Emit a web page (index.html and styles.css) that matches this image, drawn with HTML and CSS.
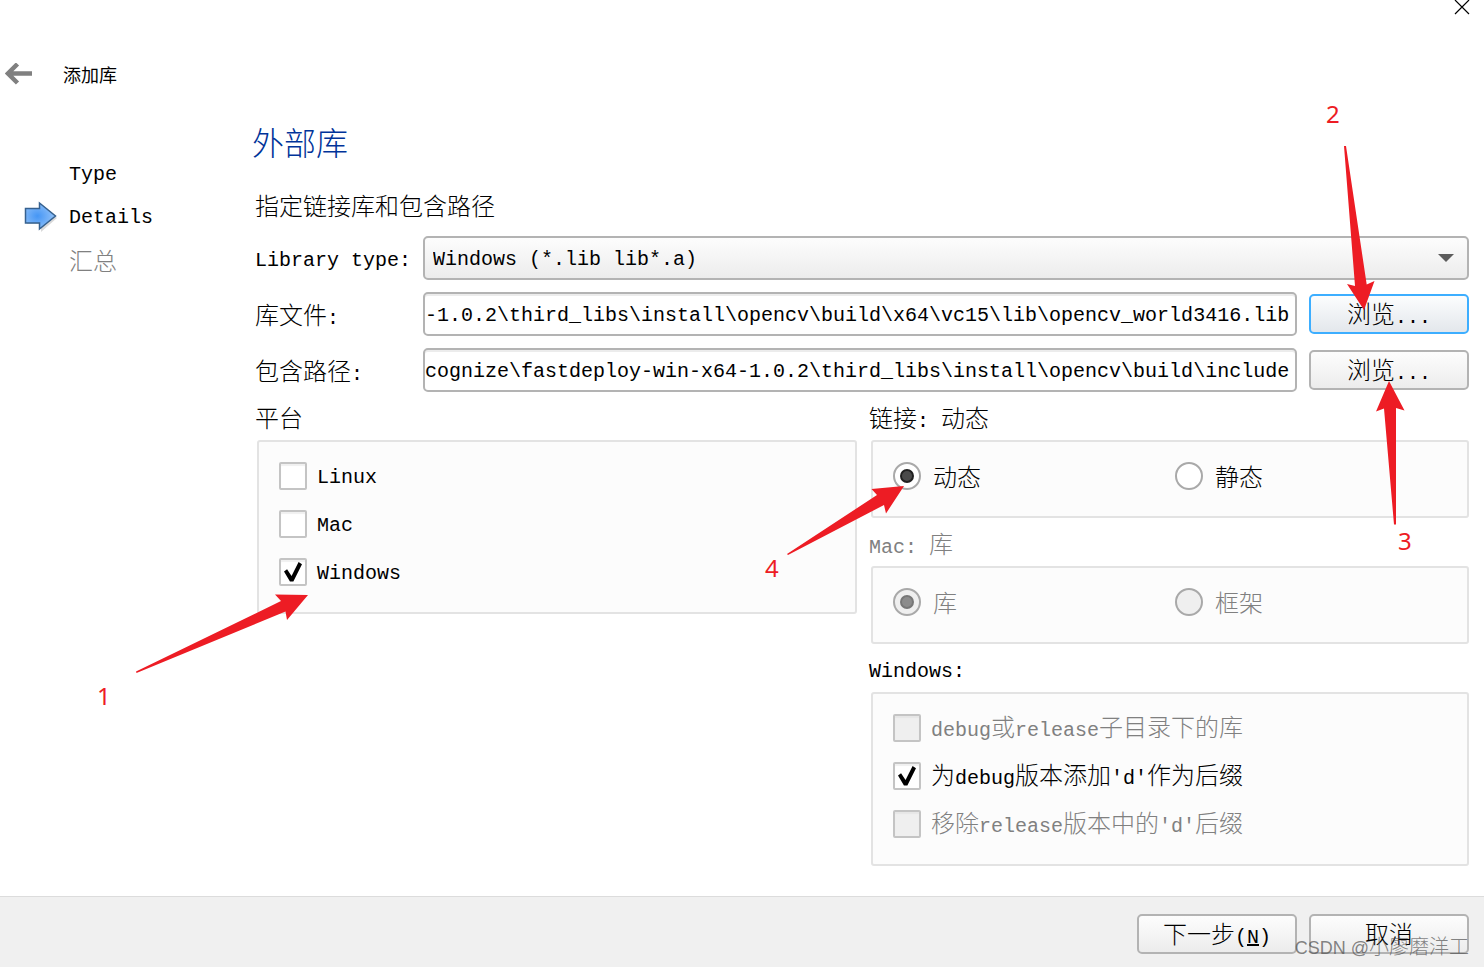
FILE: index.html
```html
<!DOCTYPE html>
<html lang="zh-CN">
<head>
<meta charset="utf-8">
<title>添加库</title>
<link rel="stylesheet" href="styles.css">
</head>
<body>
<div class="wizard">
  <header class="titlebar">
    <button class="close" type="button" aria-label="关闭">
      <svg width="16" height="15" viewBox="0 0 16 15"><path d="M1 0L15 14M15 0L1 14" stroke="#000" stroke-width="1.2" fill="none"/></svg>
    </button>
    <div class="title-row">
      <button class="back" type="button" aria-label="返回">
        <svg width="28" height="22" viewBox="0 0 28 22"><path d="M27 10.500H3M12.500 1L3 10.500L12.500 20" stroke="#808080" stroke-width="4.500" fill="none"/></svg>
      </button>
      <span class="title">添加库</span>
    </div>
  </header>

  <div class="body">
    <nav class="steps">
      <ol>
        <li><span class="en">Type</span></li>
        <li class="current">
          <svg class="step-arrow" width="34" height="31" viewBox="0 0 34 31">
            <defs>
              <radialGradient id="blue" cx="0.4" cy="0.5" r="0.6"><stop offset="0" stop-color="#4596f5"/><stop offset="1" stop-color="#93c2f8"/></radialGradient>
            </defs>
            <path d="M3 9H17V3L33 17L17 31V23H3Z" fill="#000" opacity="0.15"/>
            <path d="M1.500 7.500H15.500V2L31.500 15L15.500 28V22H1.500Z" fill="url(#blue)" stroke="#36618f" stroke-width="1.500"/>
          </svg>
          <span class="en">Details</span>
        </li>
        <li class="muted"><span class="zh">汇总</span></li>
      </ol>
    </nav>

    <main class="page">
      <h1>外部库</h1>
      <p class="intro zh">指定链接库和包含路径</p>

      <div class="form">
        <label class="en" for="type">Library type:</label>
        <div class="select-wrap">
          <select id="type"><option>Windows (*.lib lib*.a)</option></select>
          <svg class="caret" width="16" height="8" viewBox="0 0 16 8"><path d="M0 0H16L8 8Z" fill="#5c5c5c"/></svg>
        </div>
        <label for="lib"><span class="zh">库文件</span>:</label>
        <input class="field" id="lib" type="text" value="-1.0.2\third_libs\install\opencv\build\x64\vc15\lib\opencv_world3416.lib">
        <button class="btn focused" type="button"><span class="zh">浏览</span>...</button>
        <label for="inc"><span class="zh">包含路径</span>:</label>
        <input class="field" id="inc" type="text" value="cognize\fastdeploy-win-x64-1.0.2\third_libs\install\opencv\build\include">
        <button class="btn" type="button"><span class="zh">浏览</span>...</button>
      </div>

      <div class="groups">
        <section class="column">
          <h2 class="zh">平台</h2>
          <div class="box">
            <label class="option"><input type="checkbox"><span class="en">Linux</span></label>
            <label class="option"><input type="checkbox"><span class="en">Mac</span></label>
            <label class="option"><input type="checkbox" checked><span class="en">Windows</span></label>
          </div>
        </section>
        <section class="column">
          <h2><span class="zh">链接</span>: <span class="zh">动态</span></h2>
          <div class="box pair">
            <label class="option"><input type="radio" name="link" checked><span class="zh">动态</span></label>
            <label class="option"><input type="radio" name="link"><span class="zh">静态</span></label>
          </div>
          <h2 class="muted">Mac: <span class="zh">库</span></h2>
          <div class="box pair">
            <label class="option muted"><input type="radio" name="mac" checked disabled><span class="zh">库</span></label>
            <label class="option muted"><input type="radio" name="mac" disabled><span class="zh">框架</span></label>
          </div>
          <h2 class="en">Windows:</h2>
          <div class="box">
            <label class="option muted"><input type="checkbox" disabled><span>debug<span class="zh">或</span>release<span class="zh">子目录下的库</span></span></label>
            <label class="option"><input type="checkbox" checked><span><span class="zh">为</span>debug<span class="zh">版本添加</span>'d'<span class="zh">作为后缀</span></span></label>
            <label class="option muted"><input type="checkbox" disabled><span><span class="zh">移除</span>release<span class="zh">版本中的</span>'d'<span class="zh">后缀</span></span></label>
          </div>
        </section>
      </div>
    </main>
  </div>

  <footer class="actions">
    <button class="btn" type="button"><span class="zh">下一步</span>(<u>N</u>)</button>
    <button class="btn" type="button"><span class="zh">取消</span></button>
  </footer>

  <svg class="annotations" width="1484" height="967" viewBox="0 0 1484 967">
    <path d="M136 671.500L281 601L275 594.500L308 595L287 620L285.500 611.500L136.500 673Z"/>
    <path d="M1344 146H1346L1366.700 284.600L1374.500 281L1364 310L1347 284L1355 286Z"/>
    <path d="M1394 524.500H1396L1396 408L1404.500 410.500L1389 381L1376 411.500L1384 408.500Z"/>
    <path d="M787 554L877 495L871.500 489L904 486L886 513.500L884 505L788 555Z"/>
    <text x="97" y="705">1</text>
    <text x="1326" y="123">2</text>
    <text x="1398" y="550">3</text>
    <text x="765" y="577">4</text>
  </svg>
  <div class="watermark">CSDN @<span>小廖磨洋工</span></div>
</div>
</body>
</html>
```
FILE: styles.css
```css
*, *::before { box-sizing: border-box; }

body {
  margin: 0;
  background: #fff;
  color: #000;
  font: 20px/24px "Liberation Mono", "Noto Sans CJK SC", monospace;
}

button, input, select { font: inherit; color: inherit; }

.zh {
  font-family: "Noto Sans CJK SC", sans-serif;
  font-size: 24px;
  font-weight: 300;
}

.en { padding-top: 3px; }

.muted { color: #808080; }

.wizard {
  position: relative;
  display: flex;
  flex-direction: column;
  min-height: 100vh;
  overflow: hidden;
}

.titlebar { display: flex; flex-direction: column; }

.close, .back {
  display: flex;
  padding: 0;
  border: 0;
  background: none;
}

.close { align-self: flex-end; margin-right: 14px; }

.title-row {
  display: flex;
  align-items: center;
  gap: 30px;
  height: 28px;
  margin-top: 45px;
  padding-left: 5px;
}

.title { font: 18px/28px "Noto Sans CJK SC", sans-serif; }

.body { display: flex; flex: 1; padding-right: 15px; }

.steps { flex: 0 0 255px; padding-top: 64px; }

.steps ol { margin: 0; padding: 0; list-style: none; }

.steps li {
  display: flex;
  align-items: center;
  height: 43px;
  padding-left: 69px;
}

.steps .current { padding-left: 24px; gap: 11px; }

.page { flex: 1; min-width: 0; padding-top: 33px; }

h1 {
  margin: 0 0 0 -3px;
  color: #003399;
  font: 300 32px/40px "Noto Sans CJK SC", sans-serif;
}

.intro { margin: 20px 0 7px; line-height: 48px; }

.form {
  display: grid;
  grid-template-columns: 156px 1fr 160px;
  align-items: center;
  gap: 12px;
}

.form > label { height: 44px; line-height: 44px; white-space: nowrap; }

.select-wrap { position: relative; grid-column: 2 / 4; }

.select-wrap select {
  display: block;
  width: 100%;
  height: 44px;
  padding: 3px 40px 0 8px;
  border: 2px solid #b3b3b3;
  border-radius: 5px;
  background: linear-gradient(#fdfdfd, #ececec);
  appearance: none;
}

.caret { position: absolute; top: 18px; right: 15px; pointer-events: none; }

.field {
  width: 100%;
  height: 44px;
  padding: 3px 6px 0 0;
  border: 2px solid #b3b3b3;
  border-radius: 5px;
  background: #fff;
  box-shadow: inset 0 2px #ececec;
  text-align: right;
}

.btn {
  width: 160px;
  height: 40px;
  padding: 0;
  border: 2px solid #b3b3b3;
  border-radius: 5px;
  background: linear-gradient(#fdfdfd, #ececec);
  line-height: 34px;
}

.btn.focused {
  border-color: #3daeff;
  background: linear-gradient(#fcfdfe, #e3e7ec);
}

.groups {
  display: grid;
  grid-template-columns: 600fr 598fr;
  align-items: start;
  gap: 14px;
  margin-left: 2px;
}

h2 {
  height: 48px;
  margin: 0 0 0 -2px;
  font-size: 20px;
  font-weight: 400;
  line-height: 50px;
}

h2.zh { font-size: 24px; font-weight: 300; }

.box {
  padding: 10px 20px 16px;
  border: 2px solid #e3e3e3;
  border-radius: 3px;
  background: #fcfcfc;
}

.pair { display: grid; grid-template-columns: 1fr 1fr; gap: 10px; }

.option { display: flex; align-items: center; gap: 10px; height: 48px; }

.pair .option { gap: 12px; }

.option input {
  display: grid;
  place-items: center;
  flex: none;
  width: 28px;
  height: 28px;
  margin: 0;
  border: 2px solid #c4c4c4;
  border-radius: 2px;
  background: #fff;
  box-shadow: inset 0 2px 1px #f0f0f0;
  appearance: none;
}

.option input:disabled { background: #efefef; box-shadow: inset 0 2px 1px #e6e6e6; }

.option input[type="checkbox"]:checked::before {
  content: "";
  width: 18px;
  height: 20px;
  background: #000;
  clip-path: polygon(0 48%, 17% 36%, 42% 70%, 81% 0, 100% 11%, 52% 97%, 33% 97%);
}

.option input[type="radio"] {
  border-color: #a9a9a9;
  border-radius: 50%;
  box-shadow: none;
}

.option input[type="radio"]:checked::before {
  content: "";
  width: 14px;
  height: 14px;
  border: 2px solid #202020;
  border-radius: 50%;
  background: #4a4a4a;
}

.option input[type="radio"]:disabled:checked::before {
  border-color: #777;
  background: #8c8c8c;
}

.actions {
  display: flex;
  justify-content: flex-end;
  gap: 12px;
  padding: 17px 15px 13px;
  border-top: 1px solid #dcdcdc;
  background: #f0f0f0;
}

.annotations {
  position: absolute;
  top: 0;
  left: 0;
  fill: #ed1c24;
  font: 24px "Noto Sans", sans-serif;
  pointer-events: none;
}

.watermark {
  position: absolute;
  right: 15px;
  bottom: 7px;
  color: rgba(80, 80, 80, 0.7);
  font: 18px/24px "Liberation Sans", "Noto Sans CJK SC", sans-serif;
  pointer-events: none;
}

.watermark span { font-size: 20px; font-weight: 300; }
```
